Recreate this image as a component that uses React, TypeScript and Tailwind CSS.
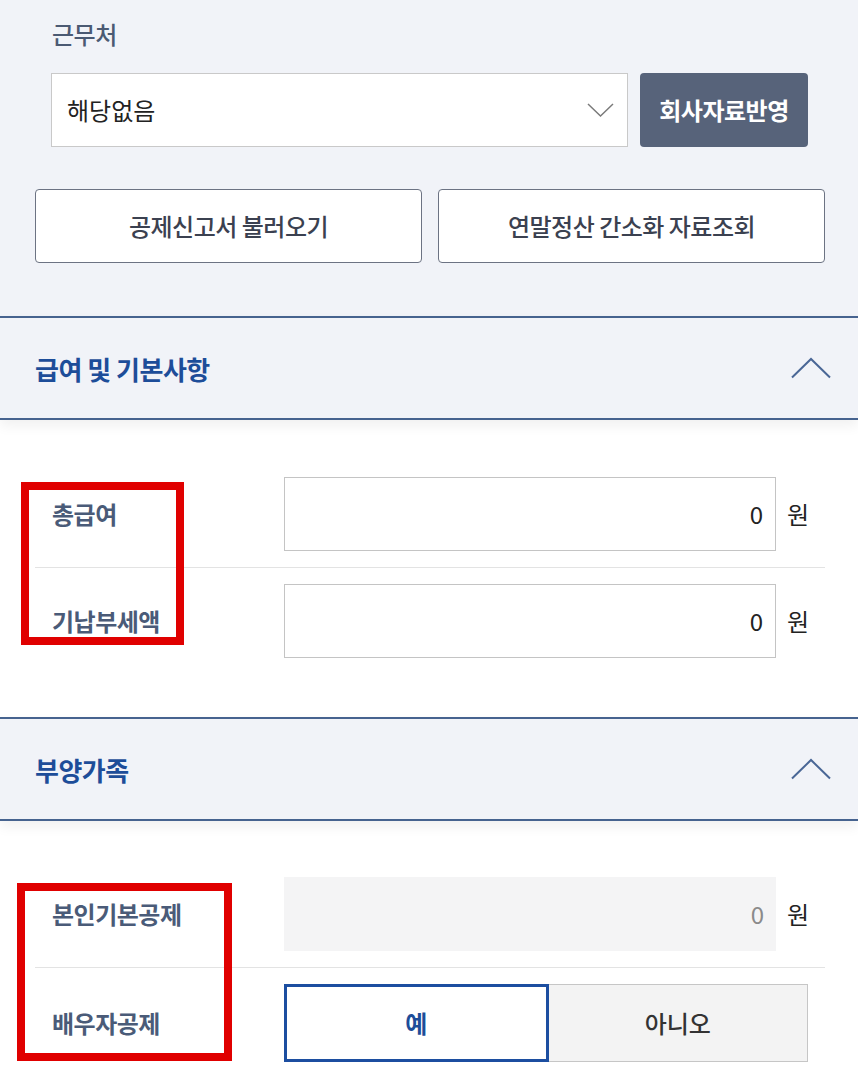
import React from "react";

const font = { fontFamily: '"Noto Sans CJK KR", "Noto Sans", sans-serif' };

function ChevronDown() {
  return (
    <svg width="27" height="16" viewBox="0 0 27 16" fill="none">
      <polyline points="1,2 13.5,14 26,2" stroke="#7a7a7a" strokeWidth="1.5" fill="none" />
    </svg>
  );
}

function ChevronUp() {
  return (
    <svg width="40" height="22" viewBox="0 0 40 22" fill="none">
      <polyline points="1,20.5 20,2 39,20.5" stroke="#4a6796" strokeWidth="2" fill="none" />
    </svg>
  );
}

function SectionHeader({ title }: { title: string }) {
  return (
    <div className="relative z-10 flex h-[104px] items-center justify-between border-y-2 border-[#46638f] bg-[#f1f3f8] pl-[35px] pr-[27px] shadow-[0_6px_12px_rgba(0,0,0,0.06)]">
      <span className="text-[26px] font-bold tracking-[-0.5px] text-[#1d4d99]">{title}</span>
      <ChevronUp />
    </div>
  );
}

function AmountRow({ label, value, disabled, last }: { label: string; value: string; disabled?: boolean; last?: boolean }) {
  return (
    <div className={`flex items-center pl-[17px] py-4 ${last ? "" : "border-b border-[#e3e3e3]"}`}>
      <div className="w-[232px] shrink-0 text-[24px] font-semibold tracking-[-0.5px] text-[#4a5b78]">{label}</div>
      <div
        className={`flex h-[74px] w-[492px] shrink-0 items-center justify-end pr-[12px] text-[24px] ${
          disabled ? "bg-[#f4f4f5] text-[#8a8a8a]" : "border border-[#c4c4c4] bg-white text-[#222]"
        }`}
      >
        {value}
      </div>
      <div className="ml-[11px] shrink-0 text-[24px] text-[#222]">원</div>
    </div>
  );
}

export default function App() {
  return (
    <div className="w-[858px] bg-white" style={font}>
      {/* top area */}
      <div className="bg-[#f1f3f8] pt-[16px] pb-[53px]">
        <div className="pl-[51px] pr-[50px]">
          <div className="h-[36px] pl-[1px] text-[24px] font-medium leading-[36px] tracking-[-0.5px] text-[#4b5a73]">근무처</div>
          <div className="mt-[21px] flex gap-[12px]">
            <div className="flex h-[74px] flex-1 items-center justify-between border border-[#c9c9c9] bg-white pl-[15px] pr-[13px]">
              <span className="text-[24px] text-[#222]">해당없음</span>
              <ChevronDown />
            </div>
            <div className="flex h-[74px] w-[168px] items-center justify-center rounded-[4px] bg-[#57637a] text-[24px] font-bold tracking-[-0.5px] text-white">
              회사자료반영
            </div>
          </div>
        </div>
        <div className="mt-[42px] grid grid-cols-2 gap-[16px] pl-[35px] pr-[33px]">
          <div className="flex h-[74px] items-center justify-center rounded-[4px] border-[1.5px] border-[#6c7383] bg-white text-[24px] font-medium tracking-[-0.5px] text-[#3b4150]">
            공제신고서 불러오기
          </div>
          <div className="flex h-[74px] items-center justify-center rounded-[4px] border-[1.5px] border-[#6c7383] bg-white text-[24px] font-medium tracking-[-0.5px] text-[#3b4150]">
            연말정산 간소화 자료조회
          </div>
        </div>
      </div>

      <SectionHeader title="급여 및 기본사항" />
      <div className="relative bg-white pl-[35px] pr-[33px] pt-[41px] pb-[43px]">
        <AmountRow label="총급여" value="0" />
        <AmountRow label="기납부세액" value="0" last />
        <div className="absolute left-[21px] top-[62px] h-[163px] w-[163px] border-[8px] border-[#e00000]" />
      </div>

      <SectionHeader title="부양가족" />
      <div className="relative bg-white pl-[35px] pr-[33px] pt-[40px] pb-[20px]">
        <AmountRow label="본인기본공제" value="0" disabled />
        <div className="flex items-center pl-[17px] py-4">
          <div className="w-[232px] shrink-0 text-[24px] font-semibold tracking-[-0.5px] text-[#4a5b78]">배우자공제</div>
          <div className="flex h-[78px] w-[524px] shrink-0">
            <div className="flex flex-1 items-center justify-center border-[3px] border-[#1c4ea0] bg-white text-[24px] font-semibold text-[#1d4d99]">
              예
            </div>
            <div className="flex flex-1 items-center justify-center border border-l-0 border-[#c6c6c6] bg-[#f3f3f3] text-[24px] font-medium text-[#333]">
              아니오
            </div>
          </div>
        </div>
        <div className="absolute left-[17px] top-[62px] h-[178px] w-[215px] border-[8px] border-[#e00000]" />
      </div>
    </div>
  );
}
